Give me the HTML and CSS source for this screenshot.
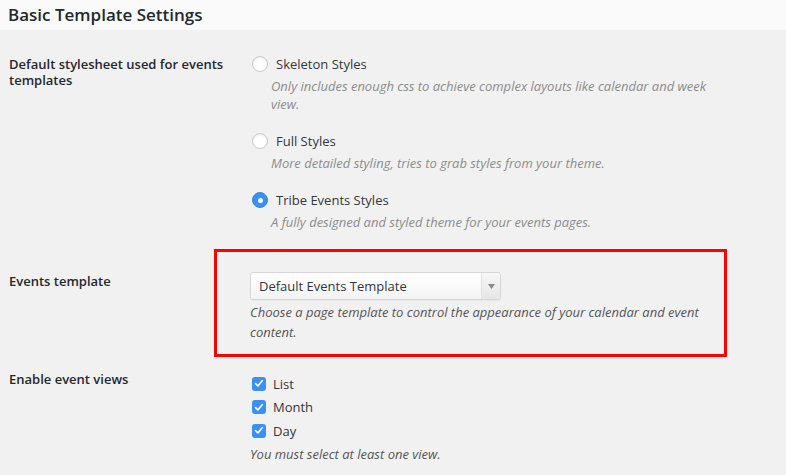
FILE: index.html
```
<!DOCTYPE html>
<html>
<head>
<meta charset="utf-8">
<link rel="stylesheet" href="styles.css">
</head>
<body>
<div class="page">
  <header class="head"><h2 class="title">Basic Template Settings</h2></header>
  <div class="rows">
    <div class="row row-style">
      <div class="label">Default stylesheet used for events templates</div>
      <div class="field">
        <div class="option">
          <div class="opt-line"><span class="radio"></span><span class="opt-text">Skeleton Styles</span></div>
          <p class="opt-desc">Only includes enough css to achieve complex layouts like calendar and week view.</p>
        </div>
        <div class="option">
          <div class="opt-line"><span class="radio"></span><span class="opt-text">Full Styles</span></div>
          <p class="opt-desc">More detailed styling, tries to grab styles from your theme.</p>
        </div>
        <div class="option">
          <div class="opt-line"><span class="radio checked"></span><span class="opt-text">Tribe Events Styles</span></div>
          <p class="opt-desc">A fully designed and styled theme for your events pages.</p>
        </div>
      </div>
    </div>
    <div class="row row-template">
      <div class="label">Events template</div>
      <div class="field">
        <div class="select"><span class="select-text">Default Events Template</span><span class="select-arrow"><svg width="7" height="5" viewBox="0 0 7 5"><path d="M0 0H7L3.5 5Z" fill="#8a8a8a"/></svg></span></div>
        <p class="help">Choose a page template to control the appearance of your calendar and event content.</p>
      </div>
      <div class="highlight"></div>
    </div>
    <div class="row row-views">
      <div class="label">Enable event views</div>
      <div class="field">
        <div class="check"><span class="box"><svg width="10" height="9" viewBox="0 0 10 9"><path d="M1.6 4.6L3.9 6.9L8.4 1.6" fill="none" stroke="#fff" stroke-width="1.6" stroke-linecap="round" stroke-linejoin="round"/></svg></span><span class="check-text">List</span></div>
        <div class="check"><span class="box"><svg width="10" height="9" viewBox="0 0 10 9"><path d="M1.6 4.6L3.9 6.9L8.4 1.6" fill="none" stroke="#fff" stroke-width="1.6" stroke-linecap="round" stroke-linejoin="round"/></svg></span><span class="check-text">Month</span></div>
        <div class="check"><span class="box"><svg width="10" height="9" viewBox="0 0 10 9"><path d="M1.6 4.6L3.9 6.9L8.4 1.6" fill="none" stroke="#fff" stroke-width="1.6" stroke-linecap="round" stroke-linejoin="round"/></svg></span><span class="check-text">Day</span></div>
        <p class="help views-help">You must select at least one view.</p>
      </div>
    </div>
  </div>
</div>
</body>
</html>
```
FILE: styles.css
```
html, body {
  margin: 0;
  padding: 0;
}
body {
  background: #f1f1f1;
  font-family: "Open Sans", "Liberation Sans", sans-serif;
  font-size: 13px;
  color: #333;
  width: 786px;
  height: 475px;
  overflow: hidden;
}
.page {
  position: relative;
}
.head {
  background: #fafafa;
  height: 30px;
  padding-left: 8px;
}
.title {
  margin: 0;
  font-size: 17px;
  font-weight: 600;
  line-height: 30px;
  color: #23282d;
  position: relative;
  top: 0;
}
.rows {
  display: flex;
  flex-direction: column;
}
.row {
  display: grid;
  grid-template-columns: 241px 1fr;
  position: relative;
}
.label {
  padding-left: 9px;
  font-weight: 600;
  line-height: 16px;
  color: #23282d;
  padding-right: 10px;
}
.row-style {
  padding-top: 24px;
}
.row-style .label {
  padding-top: 2px;
}
.option {
  margin-bottom: 18px;
}
.option:last-child {
  margin-bottom: 0;
}
.opt-line {
  display: flex;
  align-items: center;
  height: 20px;
  padding-left: 11px;
}
.radio {
  width: 14px;
  height: 14px;
  border-radius: 50%;
  border: 1px solid #c9c9c9;
  background: #fff;
  box-shadow: inset 0 1px 2px rgba(0,0,0,0.08);
  box-sizing: content-box;
  flex: none;
  position: relative;
}
.radio.checked {
  background: #3b90f3;
  border-color: #3486ea;
  box-shadow: none;
}
.radio.checked::after {
  content: "";
  position: absolute;
  width: 5px;
  height: 5px;
  border-radius: 50%;
  background: #fff;
  left: 4.5px;
  top: 4.5px;
}
.opt-text {
  margin-left: 8px;
  color: #32373c;
}
.opt-desc {
  margin: 3px 0 0 30px;
  font-style: italic;
  line-height: 18px;
  color: #8c8c8c;
  width: 450px;
}
.row-template {
  margin-top: 41px;
}
.row-template .label {
  padding-top: 1px;
}
.select {
  margin-left: 9px;
  width: 249px;
  height: 26px;
  border: 1px solid #d6d6d6;
  border-radius: 3px;
  background: linear-gradient(#ffffff, #f4f4f4);
  display: flex;
  align-items: center;
  box-shadow: 0 1px 1px rgba(0,0,0,0.04);
}
.select-text {
  flex: 1;
  padding-left: 8px;
  color: #32373c;
}
.select-arrow {
  width: 18px;
  height: 26px;
  border-left: 1px solid #e2e2e2;
  background: linear-gradient(#f7f7f7, #e6e6e6);
  display: flex;
  align-items: center;
  justify-content: center;
  border-radius: 0 3px 3px 0;
}
.help {
  margin: 2px 0 0 9px;
  font-style: italic;
  line-height: 20px;
  color: #555;
  width: 470px;
}
.highlight {
  position: absolute;
  left: 214px;
  top: -23px;
  width: 507px;
  height: 102px;
  border: 3px solid #ff0000;
}
.row-views {
  margin-top: 29px;
}
.check {
  display: flex;
  align-items: center;
  height: 23.5px;
  padding-left: 11px;
}
.row-views .field {
  padding-top: 1px;
}
.box {
  width: 14px;
  height: 14px;
  border-radius: 3px;
  background: #3b90f3;
  display: flex;
  align-items: center;
  justify-content: center;
  flex: none;
}
.check-text {
  margin-left: 7px;
  color: #32373c;
}
.views-help {
  margin-top: 1px;
}
```
